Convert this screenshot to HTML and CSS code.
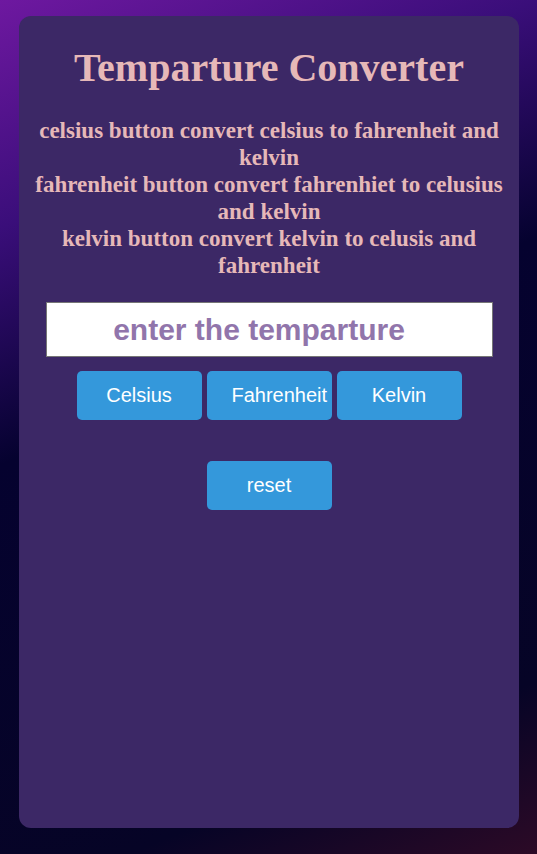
FILE: index.html
```html
<!DOCTYPE html>
<html lang="en">
<head>
<meta charset="utf-8">
<title>Temparture Converter</title>
<link rel="stylesheet" href="styles.css">
</head>
<body>
<div class="card">
  <h1 class="title">Temparture Converter</h1>
  <p class="info">celsius button convert celsius to fahrenheit and kelvin<br>fahrenheit button convert fahrenhiet to celusius and kelvin<br>kelvin button convert kelvin to celusis and fahrenheit</p>
  <input class="temp" type="text" placeholder="enter the temparture">
  <div class="row">
    <button class="btn">Celsius</button>
    <button class="btn">Fahrenheit</button>
    <button class="btn">Kelvin</button>
  </div>
  <div class="row reset-row">
    <button class="btn">reset</button>
  </div>
</div>
</body>
</html>
```
FILE: styles.css
```css
html, body {
  margin: 0;
  padding: 0;
  height: 100%;
}
body {
  background: linear-gradient(157deg, #6e18a0 0%, #3a0e7a 21%, #05022f 43%, #060426 84%, #2c0a26 100%);
  font-family: "Liberation Serif", serif;
  overflow: hidden;
}
.card {
  box-sizing: border-box;
  width: 500px;
  height: 812px;
  margin: 16px 18px 0 19px;
  background: #3c2866;
  border-radius: 12px;
  display: flex;
  flex-direction: column;
  align-items: center;
  padding-top: 20px;
}
.title {
  margin: 0;
  font-size: 40px;
  font-weight: bold;
  color: #e6b8b8;
  line-height: 64px;
}
.info {
  margin: 17px 0 0;
  padding: 0 10px;
  font-size: 23px;
  font-weight: bold;
  line-height: 27px;
  color: #e6b8b8;
  text-align: center;
}
.temp {
  box-sizing: border-box;
  width: 447px;
  height: 55px;
  margin-top: 23px;
  border: 1px solid #767676;
  background: #fff;
  font-family: "Liberation Sans", Arial, sans-serif;
  font-size: 30px;
  font-weight: bold;
  text-align: center;
  padding: 0 20px 0 0;
}
.temp::placeholder {
  color: #9175ab;
  opacity: 1;
}
.row {
  display: flex;
  gap: 5px;
  margin-top: 14px;
}
.reset-row {
  margin-top: 41px;
}
.btn {
  box-sizing: border-box;
  width: 125px;
  height: 49px;
  padding: 0 25px;
  border: none;
  border-radius: 5px;
  background: #3498db;
  color: #fff;
  font-family: "Liberation Sans", Arial, sans-serif;
  font-size: 20px;
  text-align: center;
  white-space: nowrap;
}
```
